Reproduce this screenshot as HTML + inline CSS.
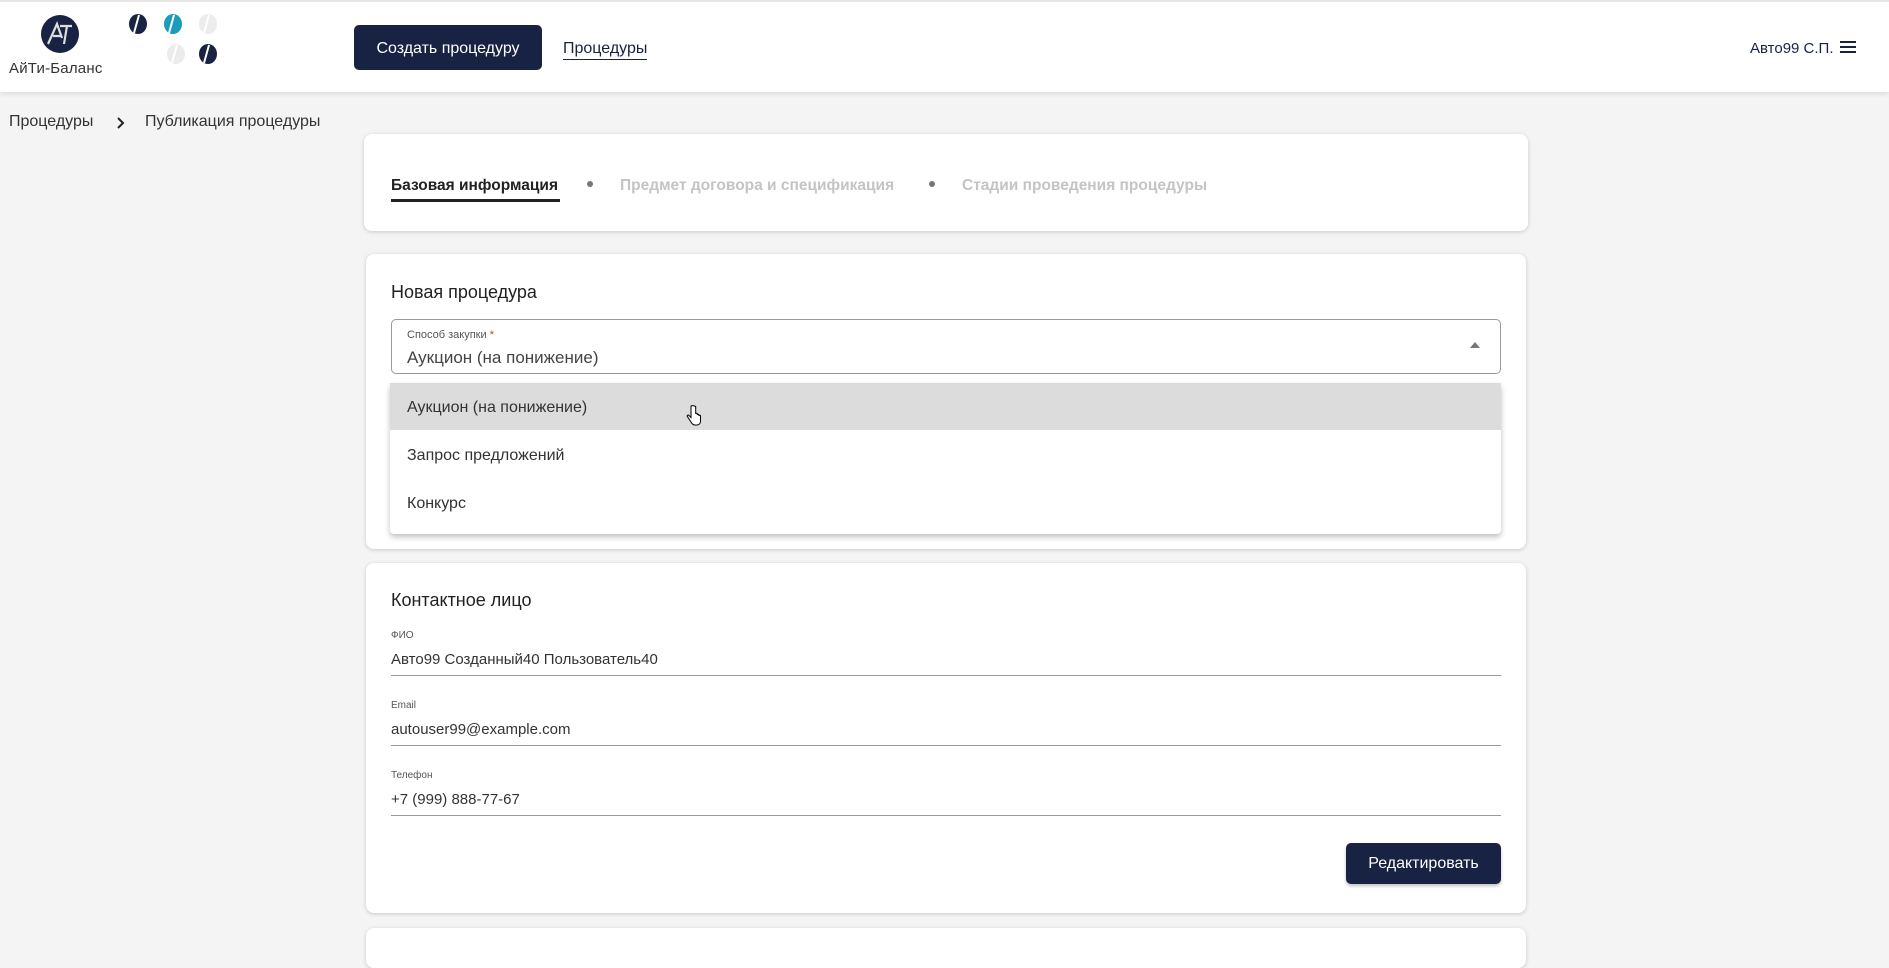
<!DOCTYPE html>
<html><head><meta charset="utf-8"><style>
*{box-sizing:border-box;margin:0;padding:0}
body{width:1889px;height:942px;overflow:hidden;background:#f4f4f4;font-family:"Liberation Sans","Noto Sans CJK SC",sans-serif;color:#1c1c1c;position:relative}
.abs{position:absolute}
.hdr{left:0;top:0;width:1889px;height:92px;background:#fff;border-top:2px solid #e6e6e6;box-shadow:0 2px 5px rgba(0,0,0,.1)}
.card{background:#fff;border-radius:8px;box-shadow:0 1px 4px rgba(0,0,0,.18)}
.btn{background:#182242;color:#fff;border-radius:5px;display:flex;align-items:center;justify-content:center}
.lbl{font-size:11px;color:#555}
.val{font-size:15px;color:#333}
.line{height:1px;background:#999}
</style></head><body>
<div class="abs hdr"></div>
<svg class="abs" style="left:40px;top:14px" width="40" height="40" viewBox="0 0 40 40"><circle cx="20" cy="20" r="19" fill="#182242"/><path d="M8 30 L17 10 L22 24 M13 22 L22 22 M20 12 L32 12 M27 12 L24 30" stroke="#ddd" stroke-width="2.2" fill="none"/></svg>
<div class="abs" style="left:9px;top:60px;font-size:15px;color:#333;letter-spacing:0.2px">АйТи-Баланс</div>
<svg class="abs" style="left:126px;top:12px" width="96" height="56" viewBox="0 0 96 56">
<g><ellipse cx="12" cy="12" rx="9" ry="10" fill="#182242"/><ellipse cx="47" cy="12" rx="9" ry="10" fill="#1d9bbb"/><ellipse cx="82" cy="12" rx="9" ry="10" fill="#ececec"/><ellipse cx="50" cy="42" rx="9" ry="10" fill="#ececec"/><ellipse cx="82" cy="42" rx="9" ry="10" fill="#182242"/></g>
<g stroke="#fff" stroke-width="2"><path d="M13 3 L8 21"/><path d="M48 3 L43 21"/><path d="M83 3 L78 21"/><path d="M51 33 L46 51"/><path d="M83 33 L78 51"/></g></svg>
<div class="abs btn" style="left:354px;top:25px;width:188px;height:45px;font-size:16px;padding-top:2px">Создать процедуру</div>
<div class="abs" style="left:563px;top:40px;font-size:16px;color:#182242;border-bottom:1.5px solid #182242;padding-bottom:1px">Процедуры</div>
<div class="abs" style="left:1750px;top:40px;font-size:15px;color:#182242">Авто99 С.П.</div>
<svg class="abs" style="left:1839px;top:40px" width="18" height="14"><path d="M1 2H17M1 7H17M1 12H17" stroke="#182242" stroke-width="2"/></svg>
<div class="abs" style="left:9px;top:113px;font-size:16px;color:#333">Процедуры</div>
<svg class="abs" style="left:116px;top:116px" width="10" height="14"><path d="M2 2L7 7L2 12" stroke="#222" stroke-width="2" fill="none"/></svg>
<div class="abs" style="left:145px;top:113px;font-size:16px;color:#333">Публикация процедуры</div>

<div class="abs card" style="left:364px;top:134px;width:1164px;height:97px"></div>
<div class="abs" style="left:391px;top:177px;font-size:15.5px;font-weight:bold;color:#222">Базовая информация</div>
<div class="abs" style="left:391px;top:199px;width:169px;height:3px;background:#222"></div>
<div class="abs" style="left:587px;top:181px;width:6px;height:6px;border-radius:50%;background:#777"></div>
<div class="abs" style="left:620px;top:177px;font-size:15.5px;font-weight:bold;color:#c4c4c4">Предмет договора и спецификация</div>
<div class="abs" style="left:929px;top:181px;width:6px;height:6px;border-radius:50%;background:#777"></div>
<div class="abs" style="left:962px;top:177px;font-size:15.5px;font-weight:bold;color:#c4c4c4">Стадии проведения процедуры</div>

<div class="abs card" style="left:366px;top:254px;width:1160px;height:295px"></div>
<div class="abs" style="left:391px;top:282px;font-size:18px;color:#222">Новая процедура</div>
<div class="abs" style="left:391px;top:319px;width:1110px;height:55px;border:1px solid #999;border-radius:5px"></div>
<div class="abs lbl" style="left:407px;top:329px">Способ закупки <span style="color:#c33">*</span></div>
<div class="abs" style="left:407px;top:348px;font-size:17px;color:#444">Аукцион (на понижение)</div>
<svg class="abs" style="left:1470px;top:342px" width="10" height="6"><path d="M0 6L5 0L10 6Z" fill="#777"/></svg>
<div class="abs" style="left:390px;top:383px;width:1111px;height:151px;background:#fff;border-radius:4px;box-shadow:0 3px 6px rgba(0,0,0,.25)"></div>
<div class="abs" style="left:390px;top:383px;width:1111px;height:47px;background:#dcdcdc"></div>
<div class="abs" style="left:407px;top:399px;font-size:16px;color:#333">Аукцион (на понижение)</div>
<div class="abs" style="left:407px;top:447px;font-size:16px;color:#333">Запрос предложений</div>
<div class="abs" style="left:407px;top:495px;font-size:16px;color:#333">Конкурс</div>
<svg class="abs" style="left:686px;top:405px" width="16" height="22" viewBox="0 0 16 22"><path d="M5 1.5v11l-2-2c-1-1-2.5 0-1.5 1.2L5 17c1 2 2 3 4 3h2c2 0 3.5-1.5 3.5-4v-5c0-1-1.6-1-1.6 0v-1c0-1-1.6-1-1.6 0v-1c0-1-1.6-1-1.6 0V1.5C7.2.3 5 .3 5 1.5z" fill="#fff" stroke="#000" stroke-width="1"/></svg>

<div class="abs card" style="left:366px;top:563px;width:1160px;height:350px"></div>
<div class="abs" style="left:391px;top:590px;font-size:18px;color:#222">Контактное лицо</div>
<div class="abs lbl" style="left:391px;top:630px;font-size:10px">ФИО</div>
<div class="abs val" style="left:391px;top:651px">Авто99 Созданный40 Пользователь40</div>
<div class="abs line" style="left:391px;top:675px;width:1110px"></div>
<div class="abs lbl" style="left:391px;top:700px;font-size:10px">Email</div>
<div class="abs val" style="left:391px;top:721px">autouser99@example.com</div>
<div class="abs line" style="left:391px;top:745px;width:1110px"></div>
<div class="abs lbl" style="left:391px;top:770px;font-size:10px">Телефон</div>
<div class="abs val" style="left:391px;top:791px">+7 (999) 888-77-67</div>
<div class="abs line" style="left:391px;top:815px;width:1110px"></div>
<div class="abs btn" style="left:1346px;top:843px;width:155px;height:41px;font-size:16px;box-shadow:0 2px 3px rgba(0,0,0,.25)">Редактировать</div>

<div class="abs card" style="left:366px;top:928px;width:1160px;height:40px"></div>
</body></html>
